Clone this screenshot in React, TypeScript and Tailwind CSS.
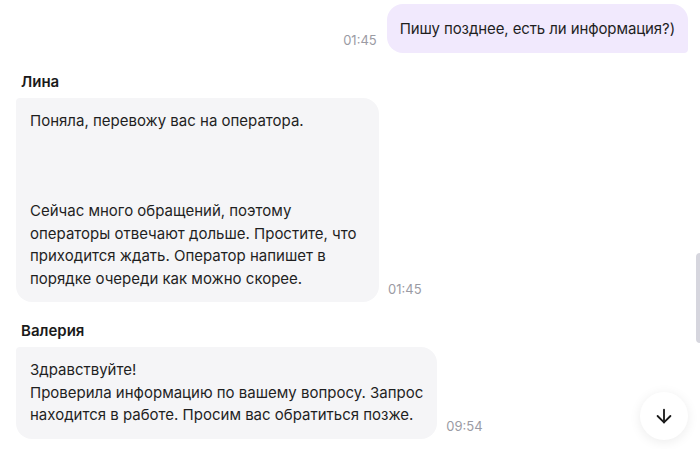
import { ArrowDown } from "lucide-react";

type Msg = {
    author?: string;
    text: string;
    time: string;
    mine?: boolean;
    width?: string;
};

const messages: Msg[] = [
    { mine: true, text: "Пишу позднее, есть ли информация?)", time: "01:45" },
    {
        author: "Лина",
        text: "Поняла, перевожу вас на оператора.\n\n\n\nСейчас много обращений, поэтому операторы отвечают дольше. Простите, что приходится ждать. Оператор напишет в порядке очереди как можно скорее.",
        time: "01:45",
        width: "w-[363px]",
    },
    {
        author: "Валерия",
        text: "Здравствуйте!\nПроверила информацию по вашему вопросу. Запрос\nнаходится в работе. Просим вас обратиться позже.",
        time: "09:54",
        width: "w-fit",
    },
];

function Time({ value }: { value: string }) {
    return <span className="mb-[5px] shrink-0 text-[13px] leading-4 text-[#9b9ba4]">{value}</span>;
}

function Message({ msg }: { msg: Msg }) {
    if (msg.mine) {
        return (
            <div className="flex items-end justify-end gap-[10px]">
                <Time value={msg.time} />
                <div className="whitespace-pre-line rounded-2xl rounded-br-[4px] bg-[#f1e9fd] px-[13px] py-[13px] leading-[23px] tracking-[-0.1px]">
                    {msg.text}
                </div>
            </div>
        );
    }
    return (
        <div className="mt-[19px] flex flex-col">
            <div className="mb-[6px] pl-[5px] font-semibold leading-5 text-[#1a1a1a]">{msg.author}</div>
            <div className="flex items-end gap-[9px]">
                <div className={`${msg.width} whitespace-pre-line rounded-2xl rounded-tl-[4px] bg-[#f5f5f7] py-3 pl-[14px] pr-[14px] leading-[22.5px]`}>
                    {msg.text}
                </div>
                <Time value={msg.time} />
            </div>
        </div>
    );
}

export default function App() {
    return (
        <div className="relative h-[449px] w-[700px] overflow-hidden bg-white font-['Inter',sans-serif] text-[15px] text-[#1f1f1f]">
            <div className="flex flex-col pl-4 pr-3 pt-1">
                {messages.map((m, i) => (
                    <Message key={i} msg={m} />
                ))}
            </div>
            {/* scrollbar thumb */}
            <div className="absolute right-0 top-[253px] h-[90px] w-[4px] rounded-l-full bg-[#d6d6de]" />
            <button className="absolute left-[640px] top-[392px] flex h-12 w-12 items-center justify-center rounded-full bg-white shadow-[0_2px_12px_rgba(0,0,0,0.08)]">
                <ArrowDown size={22} strokeWidth={2} className="text-[#1a1a1a]" />
            </button>
        </div>
    );
}
